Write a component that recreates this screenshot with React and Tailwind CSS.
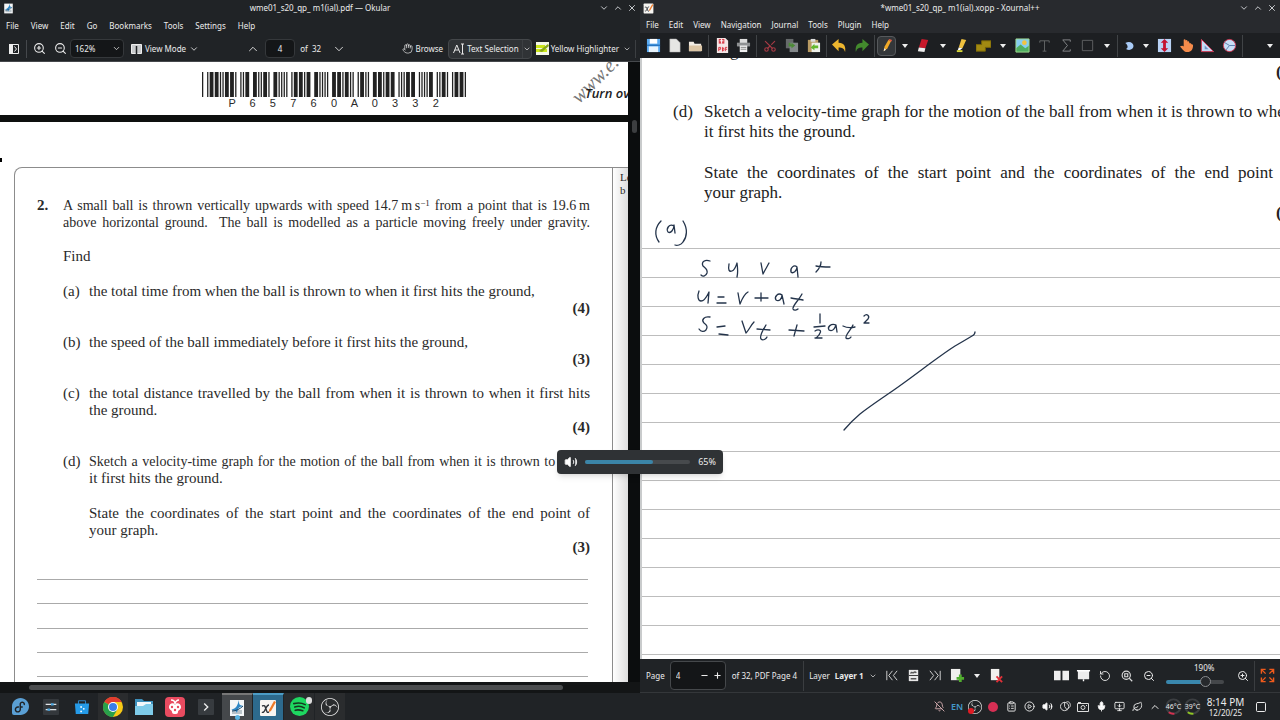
import {
  BellOff, ChevronDown, ChevronUp, ClipboardList, Hand, Leaf, Mic, Minus,
  MonitorDown, PlayCircle, Plus, RotateCcw, Scissors, Square, Volume2, X, ZoomIn, ZoomOut,
} from 'lucide-react'
import { SiFedora, SiObsstudio } from 'react-icons/si'

const OKULAR_MENU = ['File', 'View', 'Edit', 'Go', 'Bookmarks', 'Tools', 'Settings', 'Help']
const XOURNAL_MENU = ['File', 'Edit', 'View', 'Navigation', 'Journal', 'Tools', 'Plugin', 'Help']

// Code 39: nine elements per character, bars and spaces alternating
const CODE39 = {
  '*': 'nwnnwnwnn', P: 'nnwnwnnwn', 6: 'nnwwwnnnn', 5: 'wnnwwnnnn', 7: 'nnnwnnwnw',
  0: 'nnnwwnwnn', A: 'wnnnnwnnw', 3: 'wnwwnnnnn', 2: 'nnwwnnnnw',
}
const PAPER_CODE = 'P65760A0332'

function Barcode({ value }) {
  const bars = []
  let x = 0
  for (const ch of `*${value}*`) {
    CODE39[ch].split('').forEach((el, i) => {
      const w = el === 'w' ? 3 : 1
      if (i % 2 === 0) bars.push(<rect key={x} x={x} width={w} height="10" />)
      x += w
    })
    x += 1
  }
  return (
    <svg viewBox={`0 0 ${x - 1} 10`} preserveAspectRatio="none" className="w-full h-[25px] fill-[#222]" aria-label="Barcode">
      {bars}
    </svg>
  )
}

function WindowButtons() {
  return (
    <div className="absolute right-0 top-0 h-4 flex items-center gap-1 pr-[3px] text-gray-200">
      <button aria-label="Minimize"><ChevronDown size={10} /></button>
      <button aria-label="Maximize"><ChevronUp size={10} /></button>
      <button aria-label="Close"><X size={10} /></button>
    </div>
  )
}

function OkularIcon({ className }) {
  return (
    <svg viewBox="0 0 18 18" className={className}>
      <path d="M2 1h14v16H2z" fill="#f4f6f7" />
      <path d="M4 11h10v4H4z" fill="#b9c3c9" />
      <path d="M2 10c4 1 7-1 9-9 0 4 0 5 4 6-4 1-5 2-6 7-1-3-4-3-7-4z" fill="#2d86c4" />
      <path d="M4 12c4 0 8-2 11-5" fill="none" stroke="#14456b" />
    </svg>
  )
}

function XournalIcon({ className }) {
  return (
    <svg viewBox="0 0 18 18" className={className}>
      <rect x="1" y="1" width="16" height="16" rx="1" fill="#f7f5f2" />
      <path d="M3 7c3-1 3 0 4 3s1 4 3 3M10 6c-2 0-3 3-4 5s-2 3-3 2" fill="none" stroke="#30343a" strokeWidth="1.4" />
      <path d="m10 11 5-9 2 1-5 9-2 1z" fill="#ee7a28" />
    </svg>
  )
}

function Menu({ items, className }) {
  return (
    <nav className={`flex items-center pl-[6px] ${className}`}>
      {items.map((item) => <button key={item}>{item}</button>)}
    </nav>
  )
}

function OkularToolbar() {
  return (
    <div className="h-[26px] shrink-0 flex items-center pl-[9px] border-b border-[#45484c]">
      <button aria-label="Show sidebar">
        <svg viewBox="0 0 10 10" className="w-[10px] h-[10px]">
          <path d="M.5.5h9v9h-9z" fill="none" stroke="#eee" />
          <path d="M0 0h4v10H0z" fill="#eee" />
          <path d="m5.500 2.500 2 2.500-2 2.500" fill="none" stroke="#eee" />
        </svg>
      </button>
      <span className="w-px h-[18px] bg-[#45484c] ml-[7px] mr-[6px]" />
      <button aria-label="Zoom in"><ZoomIn size={13} strokeWidth={2} /></button>
      <button aria-label="Zoom out" className="ml-2"><ZoomOut size={13} strokeWidth={2} /></button>
      <div className="relative ml-[3px]">
        <select aria-label="Zoom" className="appearance-none w-[54px] h-[19px] pl-1 bg-[#141618] border border-[#35383b] rounded-sm">
          <option>162%</option>
        </select>
        <ChevronDown size={9} className="absolute right-[3px] top-[5px] pointer-events-none" />
      </div>
      <button className="flex items-center gap-[3px] ml-[7px]">
        <svg viewBox="0 0 11 10" className="w-[11px] h-[10px]">
          <path d="M.5.5h10v9H.5z" fill="#c9cbcd" stroke="#eee" />
          <path d="M5.500 2v8" stroke="#202326" strokeWidth="1.500" />
        </svg>
        View Mode
        <ChevronDown size={10} />
      </button>
      <button aria-label="Previous page" className="ml-[47px]"><ChevronUp size={14} strokeWidth={1.5} /></button>
      <input aria-label="Page" defaultValue="4" className="w-[30px] h-[19px] ml-[5px] text-center bg-[#141618] border border-[#35383b] rounded-sm" />
      <span className="ml-[5px] whitespace-nowrap">of&nbsp; 32</span>
      <button aria-label="Next page" className="ml-[11px]"><ChevronDown size={14} strokeWidth={1.5} /></button>
      <button className="flex items-center gap-[2px] ml-auto mr-[5px]"><Hand size={11} strokeWidth={1.5} />Browse</button>
      <button className="flex items-center h-[20px] pl-[4px] whitespace-nowrap bg-[#303336] border border-[#44474a] rounded-sm">
        <svg viewBox="0 0 12 12" className="w-3 h-3 mr-[2px]" fill="none" stroke="#e8e8e8">
          <path d="m.5 10 3.300-8 3.300 8M1.800 7h4M8 1h3M8 11h3M9.500 1v10" />
        </svg>
        Text Selection
        <span className="flex items-center h-full ml-[3px] border-l border-[#3c3f42]"><ChevronDown size={8} /></span>
      </button>
      <button className="flex items-center gap-[2px] ml-[4px] whitespace-nowrap">
        <svg viewBox="0 0 13 13" className="w-[13px] h-[13px]">
          <path d="M0 0h13v13H0z" fill="#f5f8e8" />
          <path d="M0 3h9v3H0zM0 7h11v3H0z" fill="#cbe61c" />
          <path d="m3 9 9-7 1 2-7 6z" fill="#87a719" />
        </svg>
        Yellow Highlighter
      </button>
      <button aria-label="Highlighter colors" className="mx-[4px]"><ChevronDown size={8} /></button>
      <span className="w-px h-[18px] bg-[#3c3f42] mr-[4px]" />
    </div>
  )
}

function Question({ label, marks, children }) {
  return (
    <div>
      <div className="flex">
        <span className="w-[26px] shrink-0">{label}</span>
        <div className="flex-1 min-w-0">{children}</div>
      </div>
      {marks && <p className="text-right font-bold">{marks}</p>}
    </div>
  )
}

const JUSTIFY = '[text-align-last:justify] whitespace-nowrap'

function OkularPage() {
  return (
    <div className="flex-1 min-w-0 relative overflow-hidden bg-white text-[#2a2a2a] font-['Liberation_Serif',serif]">
      <div className="relative h-[53px]">
        <div className="w-[264px] ml-[202px] pt-[10px]">
          <Barcode value={PAPER_CODE} />
          <div className="flex px-[20px] text-[11px] leading-[13px] font-['Liberation_Sans',sans-serif]">
            {PAPER_CODE.split('').map((ch, i) => <span key={i} className="flex-1 text-center">{ch}</span>)}
          </div>
        </div>
        <span className="absolute left-[566px] top-[7px] -rotate-45 text-[20px] leading-5 italic text-[#777]">www.e.</span>
        <span className="absolute left-[585px] top-[23px] text-[13px] leading-4 font-semibold italic text-[#222] whitespace-nowrap font-['Open_Sans',sans-serif]">Turn ov</span>
      </div>
      <div className="h-[7px] bg-[#0e100f]" />
      <div className="h-[36px]" />
      <div className="h-[4px] w-[2px] bg-black" />
      <div className="h-[5px]" />
      <div className="flex pl-[14px] h-[540px]">
        <div className="flex-1 min-w-0 pl-[22px] pr-[22px] pt-[29px] border-t border-x border-[#8c8c8c] rounded-tl-lg text-[15px] leading-[17px]">
          <div className="flex">
            <b className="w-[26px] shrink-0">2.</b>
            <div className="flex-1 min-w-0 flex flex-col">
              <p className={`text-[14px] ${JUSTIFY}`}>A small ball is thrown vertically upwards with speed 14.7&#8201;m&#8201;s<sup className="text-[9px] leading-none">−1</sup> from a point that is 19.6&#8201;m</p>
              <p className={`text-[14px] ${JUSTIFY}`}>above horizontal ground.&nbsp; The ball is modelled as a particle moving freely under gravity.</p>
              <p className="mt-[17px] mb-[18px]">Find</p>
              <div className="flex flex-col gap-[17px]">
                <Question label="(a)" marks="(4)"><p>the total time from when the ball is thrown to when it first hits the ground,</p></Question>
                <Question label="(b)" marks="(3)"><p>the speed of the ball immediately before it first hits the ground,</p></Question>
                <Question label="(c)" marks="(4)">
                  <p className={JUSTIFY}>the total distance travelled by the ball from when it is thrown to when it first hits</p>
                  <p>the ground.</p>
                </Question>
                <Question label="(d)" marks="(3)">
                  <p className={`text-[14px] ${JUSTIFY}`}>Sketch a velocity-time graph for the motion of the ball from when it is thrown to when</p>
                  <p>it first hits the ground.</p>
                  <p className={`mt-[18px] ${JUSTIFY}`}>State the coordinates of the start point and the coordinates of the end point of</p>
                  <p>your graph.</p>
                </Question>
              </div>
            </div>
          </div>
          <div className="flex flex-col h-[121px] mr-[2px]">
            {[1, 2, 3, 4, 5].map((n) => <div key={n} className="flex-1 border-b border-[#aaa]" />)}
          </div>
        </div>
        <div className="w-[15px] shrink-0 border-t border-[#8c8c8c] pt-[3px] pl-[7px] text-[11px] leading-[13px] whitespace-nowrap bg-linear-to-r from-white to-[#dedede]">
          <p>Le</p>
          <p>b</p>
        </div>
      </div>
    </div>
  )
}

function Okular() {
  return (
    <section className="flex flex-col min-w-0 min-h-0 bg-[#202326]">
      <header className="relative h-4 shrink-0 flex items-center justify-center">
        <OkularIcon className="absolute left-[3px] top-[3px] w-[11px] h-[11px]" />
        wme01_s20_qp_ m1(ial).pdf — Okular
        <WindowButtons />
      </header>
      <Menu items={OKULAR_MENU} className="h-5 shrink-0 gap-[12px]" />
      <OkularToolbar />
      <div className="flex flex-1 min-h-0">
        <OkularPage />
        <div className="w-3 bg-[#0b0d0e] flex justify-center pt-[58px]">
          <span className="w-[5px] h-[13px] rounded-full bg-[#3c3e40]" />
        </div>
      </div>
      <div className="h-[11px] shrink-0 bg-[#131516] pt-[3px] pl-[29px] pr-[77px]">
        <div className="h-[5px] rounded-full bg-[#4b4d4f]" />
      </div>
    </section>
  )
}

const ART = {
  save: <><path d="M1 1h14v14H1z" fill="#5aa9f0" /><path d="M4 1h8v5H4z" fill="#fff" /><path d="M3 9h10v6H3z" fill="#e9f4fd" /><path d="M1 7h14v1.500H1z" fill="#2673bd" /></>,
  page: <path d="M3 1h7l4 4v10H3z" fill="#e6e6e4" stroke="#aaa" strokeWidth=".5" />,
  folder: <><path d="M1 4h5l1 2h7v8H1z" fill="#f1ece4" /><path d="M1 8h14v6H1z" fill="#dcc6a6" /></>,
  pdf: <><path d="M2 0h9l3 3v13H2z" fill="#f3e6e6" /><path d="M4 1h6v5H4z" fill="#d8404d" /><path d="M5 3h4M7 1v5" stroke="#fff" /><path d="M4 14v-4h2v2H4M8 10v4c2 0 2-4 0-4M11 14v-4h2M11 12h2" fill="none" stroke="#d8303d" /></>,
  print: <><path d="M4 1h8v5H4z" fill="#ddd" /><path d="M1 5h14v4H1z" fill="#8f9193" /><path d="M4 8h8v7H4z" fill="#eee" /><path d="M5 10h6M5 12h6" stroke="#888" /></>,
  copy: <><path d="M2 1h8v10H2z" fill="#666a6b" /><path d="M6 5h9v10H6z" fill="#83888a" /><path d="M5 5v4h3v2l4-3-4-3v2H7V5z" fill="#4a8a34" /></>,
  paste: <><path d="M2 2h11v13H2z" fill="#b99b63" /><path d="M5 1h5v3H5z" fill="#ddd" /><path d="M6 5h9v10H6z" fill="#eef0ea" /><path d="M13 8H9V6l-4 4 4 3v-2h4z" fill="#65b82e" /></>,
  undo: <path d="M0 7 7 1v4c6 0 8 4 7 10-1-4-3-5-7-5v4z" fill="#eeb62f" />,
  redo: <path d="M16 7 9 1v4C3 5 1 9 2 15c1-4 3-5 7-5v4z" fill="#438a2d" />,
  pen: <><path d="m5 14 1-5 4-7 3 1-4 8z" fill="#f0a928" /><path d="m10 2 1-1 3 1-1 2z" fill="#e15a45" /><path d="m5 14 .5-3 2 1.500z" fill="#eee" /></>,
  eraser: <><path d="m6 1 7 1-3 9-7-1z" fill="#c8192b" /><path d="m3 10 7 1-1 4-7-1z" fill="#eee" /></>,
  marker: <><path d="m8 1 5 1-4 9-4-1z" fill="#edbf3e" /><path d="m5 10 4 1-3 2H4z" fill="#fff" /><path d="M3 14h6" stroke="#d9d93a" strokeWidth="2" /></>,
  brick: <path d="M6 3h10v7h-6v4H0V7h6z" fill="#a28a12" stroke="#776407" />,
  image: <><path d="M1 1h14v14H1z" fill="#86cdf1" /><path d="M1 11 6 7l5 4 4-3v7H1z" fill="#4fae61" /><circle cx="10" cy="5" r="2.500" fill="#f3c33f" /><path d="M1 1h14v14H1z" fill="none" stroke="#9fdc8c" /></>,
  text: <path d="M3 5V3h10v2M8 3v11M6 14h4" fill="none" stroke="#646668" />,
  sigma: <path d="M12 4V2H4l5 6-5 6h8v-2" fill="none" stroke="#85878a" />,
  rect: <path d="M2.500 2.500h11v11h-11z" fill="none" stroke="#5f6163" />,
  shape: <path d="M3 4c6-3 11 0 11 4s-5 7-10 4c3-1 3-5-1-8z" fill="#a9cbf7" />,
  vspace: <><path d="M1 1h14v14H1z" fill="#b9d2f5" /><path d="M8 1 4 5h2.500v6H4l4 4 4-4H9.500V5H12z" fill="#c41230" /></>,
  hand: <path d="M5 9V2c0-1 2-1 2 0v1c0-1 2-1 2 0v1c1-1 2 0 2 1s2 0 2 1 2 0 2 2c0 4-2 7-6 7-4 0-5-3-8-6 2-1 3-1 4 0z" fill="#f58b4b" />,
  setsquare: <><path d="M1.500 1.500v13h13z" fill="#c5dbf6" stroke="#d23b56" /><path d="M5 8v4h4z" fill="#6f93c4" /></>,
  compass: <><circle cx="8" cy="8" r="6.500" fill="#c8def7" stroke="#d23b56" /><path d="M8 8 3 5M8 8h6M8 8l-4 5" stroke="#5b7fae" /></>,
  addPage: <><path d="M1 1h10v12H1z" fill="#f0f0ee" /><path d="M11 7v8M7 11h8" stroke="#51ad2f" strokeWidth="3" /></>,
  deletePage: <><path d="M2 1h9v12H2z" fill="#f0f0ee" /><path d="m8 9 6 6M14 9l-6 6" stroke="#e03038" strokeWidth="2" /></>,
  firstPage: <path d="M3 3v10M9 3 5 8l4 5M14 3l-4 5 4 5" fill="none" stroke="#d8d8d8" />,
  lastPage: <path d="M13 3v10M7 3l4 5-4 5M2 3l4 5-4 5" fill="none" stroke="#d8d8d8" />,
  gotoPage: <><path d="M3 2h10v12H3z" fill="#e8e8e8" /><path d="M3 8h10" stroke="#333" /><path d="M5 6c1-3 2 0 3-1s2-1 3 0M5 11.500h6" fill="none" stroke="#555" strokeWidth="1.500" /></>,
  twoPages: <path d="M0 3h7v10H0zM9 3h7v10H9z" fill="#eee" />,
  present: <><path d="M2 3h12v9H2z" fill="#ececec" /><path d="M1 3h14M8 12v2" stroke="#fff" strokeWidth="1.500" /></>,
  zoomFit: <><circle cx="7" cy="7" r="5.500" fill="none" stroke="#ddd" strokeWidth="1.500" /><path d="M5 5h4v4H5zM11 11l4 4" fill="none" stroke="#ddd" strokeWidth="1.500" /></>,
  fullscreen: <path d="M1.500 6V1.500H6M2 2l4 4M10 1.500h4.500V6M14 2l-4 4M1.500 10v4.500H6M2 14l4-4M10 14.500h4.500V10M14 14l-4-4" fill="none" stroke="#ee5a1c" strokeWidth="1.500" />,
}

function Art({ name, className = 'w-[15px] h-[15px]' }) {
  return <svg viewBox="0 0 16 16" className={className}>{ART[name]}</svg>
}

function Tool({ name, wide }) {
  return (
    <button aria-label={name} className={`${wide ? 'w-[22px]' : 'w-[21px]'} shrink-0 flex justify-center`}>
      <Art name={name} />
    </button>
  )
}

function Arrow() {
  return (
    <button aria-label="More options" className="w-[17px] shrink-0 flex justify-center">
      <svg viewBox="0 0 6 4" className="w-[6px] h-1"><path d="M0 0h6L3 4z" fill="#eee" /></svg>
    </button>
  )
}

function Divider() {
  return <span className="w-px h-[22px] mx-[2px] shrink-0 bg-[#404346]" />
}

function XournalToolbar() {
  return (
    <div className="h-[25px] shrink-0 flex items-center px-[2px] bg-[#1d1f22]">
      <Tool name="save" wide /><Tool name="page" /><Tool name="folder" />
      <Divider />
      <Tool name="pdf" wide /><Tool name="print" />
      <Divider />
      <button aria-label="cut" className="w-[22px] flex justify-center"><Scissors size={14} strokeWidth={2} className="-rotate-90 text-[#a43a44]" /></button>
      <Tool name="copy" /><Tool name="paste" wide />
      <Divider />
      <Tool name="undo" /><Tool name="redo" wide />
      <Divider />
      <button aria-label="pen" className="w-[19px] h-[20px] shrink-0 flex items-center justify-center bg-[#34373a] border border-[#56595c] rounded-sm">
        <Art name="pen" />
      </button>
      <Arrow /><Tool name="eraser" /><Arrow /><Tool name="marker" /><Tool name="brick" wide /><Arrow />
      <Tool name="image" wide /><Tool name="text" wide /><Tool name="sigma" wide /><Tool name="rect" /><Arrow />
      <Divider />
      <button aria-label="shape" className="w-[17px] flex justify-center"><Art name="shape" className="w-3 h-3" /></button>
      <Arrow /><Tool name="vspace" /><Tool name="hand" wide /><Tool name="setsquare" /><Tool name="compass" wide />
      <Divider />
      <span className="flex-1" />
      <Arrow />
    </div>
  )
}

// Pen strokes written over the ruled page
const INK = [
  'M21 11c-6 6-7 14-2 21', 'M34 16c-5-3-8 3-6 6 3 2 6-3 6-7l1 8', 'M43 11c5 8 4 16 0 21-2 3-6 4-8 3',
  'M70 51c-5-2-9 1-7 5 2 2 5 3 4 7-1 3-4 4-6 2', 'M89 54c-1 6 0 8 3 7 3-1 4-5 5-8 1 7 1 10 0 14',
  'M121 53l2 11c2-4 5-9 6-11', 'M157 57c-3-3-7 1-6 5 2 2 6-1 6-5l1 10', 'M181 52c0 4-3 8-5 10M176 56c5 1 9 1 14 1',
  'M59 81c-2 5-1 10 2 10 4 0 6-5 8-9l-1 11', 'M78 87h6M77 93h9', 'M98 83l2 11c2-5 4-10 8-12', 'M115 88h13M121 83v8',
  'M142 85c-4-3-8 2-6 5 3 2 6-1 6-5l2 9', 'M162 84c-3 6-10 12-9 15 1 2 4 1 5 0M151 88c4 1 8 1 12 2',
  'M70 107c-6-1-9 3-6 6 3 2 4 4 2 7-2 2-5 2-7-1', 'M77 117l8-1M79 124l9 1', 'M102 111l4 12c3-3 5-8 8-11',
  'M126 115c-3 5-7 11-5 14 2 2 5 0 6-2M117 119l13 1', 'M149 120l15 1M157 115l-3 11',
  'M180 104v9M174 117l11-1M175 121c3-2 7-1 5 2-1 3-4 5-5 5h7', 'M196 115c-5-2-9 2-7 5 4 2 6-2 7-5l1 7',
  'M213 115c-2 5-8 10-7 13 1 1 4 1 5-1M203 116c4 2 8 2 12 1', 'M224 106c3-3 6 0 4 3l-4 4h5',
  'M204 220c6-7 10-11 16-16C229 197 238 191 248 184c12-8 24-17 36-26 11-8 20-15 31-22 7-4 12-7 17-10 2-1 3-2 3-4',
]

function XournalPage() {
  return (
    <div className="flex-1 min-h-0 relative overflow-hidden pl-[2px] bg-[#c9cbcc]">
      <div className="h-full bg-white text-[#222] text-[17px] leading-[20px] font-['Liberation_Serif',serif]">
        <div className="h-[190px] pt-[44px] pl-[31px] flex whitespace-nowrap">
          <span className="w-[31px] shrink-0">(d)</span>
          <div className="flex-1 min-w-0">
            <p>Sketch a velocity-time graph for the motion of the ball from when it is thrown to when</p>
            <p>it first hits the ground.</p>
            <p className="mt-[21px] mr-[7px] [text-align-last:justify]">State the coordinates of the start point and the coordinates of the end point</p>
            <p>your graph.</p>
          </div>
        </div>
        {Array.from({ length: 15 }, (_, i) => (
          <div key={i} className={i ? 'h-[29px] border-b border-[#bdbdbd]' : 'h-px bg-[#bdbdbd]'} />
        ))}
      </div>
      <span className="absolute left-[90px] -top-[17px] text-[17px] leading-5 text-[#222] font-['Liberation_Serif',serif]">g</span>
      <b className="absolute left-[636px] top-[4px] text-[17px] leading-5 text-[#222] font-['Liberation_Serif',serif]">(</b>
      <b className="absolute left-[636px] top-[145px] text-[17px] leading-5 text-[#222] font-['Liberation_Serif',serif]">(</b>
      <svg viewBox="0 0 350 230" className="absolute left-0 top-[152px] w-[350px] h-[230px]" fill="none" stroke="#24344b" strokeWidth="1.3" strokeLinecap="round" strokeLinejoin="round" aria-label="Handwritten working">
        {INK.map((d) => <path key={d} d={d} />)}
      </svg>
    </div>
  )
}

function XournalStatus() {
  return (
    <div className="h-[34px] shrink-0 flex items-center pl-[6px] whitespace-nowrap bg-[#202326] border-b border-[#34373a]">
      <label htmlFor="page-no">Page</label>
      <div className="flex items-center w-[56px] h-[29px] ml-[5px] pl-[5px] pr-[1px] bg-[#141618] border border-[#45484b] rounded-sm">
        <input id="page-no" defaultValue="4" className="flex-1 min-w-0 bg-transparent" />
        <button aria-label="Decrease" className="w-[13px]"><Minus size={9} strokeWidth={3} /></button>
        <button aria-label="Increase" className="w-[11px]"><Plus size={9} strokeWidth={3} /></button>
      </div>
      <span className="ml-[6px]">of 32, PDF Page 4</span>
      <span className="w-px h-[30px] ml-[6px] mr-[5px] bg-[#3a3d40]" />
      <span>Layer</span>
      <button className="flex items-center gap-[5px] ml-[5px] mr-[4px] font-bold">Layer 1<ChevronDown size={8} /></button>
      <Tool name="firstPage" wide /><Tool name="gotoPage" wide /><Tool name="lastPage" wide />
      <Tool name="addPage" wide /><Arrow /><Tool name="deletePage" />
      <span className="flex-1" />
      <Tool name="twoPages" wide /><Tool name="present" wide />
      <button aria-label="Reset zoom" className="w-[22px] flex justify-center"><RotateCcw size={12} strokeWidth={1.8} /></button>
      <button aria-label="Fit page" className="w-[22px] flex justify-center"><Art name="zoomFit" className="w-3 h-3" /></button>
      <button aria-label="Zoom out" className="w-[21px] flex justify-center"><ZoomOut size={12} /></button>
      <label className="w-[58px] ml-[7px] mr-[12px] flex flex-col">
        <span className="pl-[28px] leading-[12px]">190%</span>
        <input
          type="range"
          defaultValue="72"
          className="appearance-none w-full h-1 my-[6px] rounded-full bg-[linear-gradient(to_right,#3987ad_65%,#44474a_65%)] [&::-webkit-slider-thumb]:appearance-none [&::-webkit-slider-thumb]:w-[11px] [&::-webkit-slider-thumb]:h-[11px] [&::-webkit-slider-thumb]:rounded-full [&::-webkit-slider-thumb]:bg-[#26292c] [&::-webkit-slider-thumb]:border [&::-webkit-slider-thumb]:border-[#8a8d90]"
        />
      </label>
      <button aria-label="Zoom in" className="w-[13px] flex justify-center"><ZoomIn size={12} /></button>
      <span className="w-px h-[30px] ml-[5px] mr-px bg-[#3a3d40]" />
      <Tool name="fullscreen" wide />
      <span className="w-[2px]" />
    </div>
  )
}

function Xournal() {
  return (
    <section className="flex flex-col min-w-0 min-h-0 bg-[#282a2e]">
      <header className="relative h-4 shrink-0 flex items-center justify-center">
        <XournalIcon className="absolute left-[3px] top-[3px] w-[11px] h-[11px]" />
        *wme01_s20_qp_ m1(ial).xopp - Xournal++
        <WindowButtons />
      </header>
      <Menu items={XOURNAL_MENU} className="h-[17px] shrink-0 gap-[10px]" />
      <XournalToolbar />
      <XournalPage />
      <XournalStatus />
    </section>
  )
}

function VolumeOsd({ level }) {
  return (
    <div className="absolute left-1/2 -translate-x-1/2 bottom-[246px] flex items-center w-[166px] h-6 px-[7px] rounded-sm bg-[#2f3235] shadow-md">
      <Volume2 size={14} fill="white" strokeWidth={1.5} />
      <div role="progressbar" aria-label="Volume" className="flex-1 h-1 ml-[7px] mr-[8px] rounded-full bg-[#474a4d]">
        <div className="h-full rounded-full bg-[#3b85a8]" style={{ width: `${level}%` }} />
      </div>
      <span className="text-[9px]">{level}%</span>
    </div>
  )
}

const APPS = [
  { name: 'Fedora', art: <SiFedora size={17} color="#5a9fd4" /> },
  { name: 'System Settings', art: <svg viewBox="0 0 18 18" className="w-[16px] h-[16px]"><rect width="18" height="18" rx="1" fill="#34383c" /><path d="M3 6h12M3 12h12" stroke="#dfe3e6" strokeWidth="1.500" /><path d="M9 6h3M5 12h3" stroke="#4aa5df" strokeWidth="2.500" /></svg> },
  { name: 'Discover', art: <svg viewBox="0 0 18 18" className="w-[16px] h-[18px]"><path d="M5 6V2h8v4" fill="none" stroke="#3492d6" /><path d="M1 5h16l-1 12H2z" fill="#259be8" /><circle cx="8" cy="9" r="1" fill="#fff" /><circle cx="11" cy="11" r="1" fill="#fff" /><circle cx="8" cy="14" r="1" fill="#fff" /></svg> },
  { name: 'Chrome', active: 'bg-[#2a2c2e]', art: <svg viewBox="0 0 20 20" className="w-[20px] h-[20px]"><circle cx="10" cy="10" r="10" fill="#f8c916" /><path d="M10 10 1.300 5A10 10 0 0 1 18.700 5H10z" fill="#e13c2f" /><path d="M1.300 5A10 10 0 0 0 10 20l4.300-7.500L10 10z" fill="#28a04b" /><circle cx="10" cy="10" r="5" fill="#fff" /><circle cx="10" cy="10" r="4" fill="#3b7de9" /></svg> },
  { name: 'Files', art: <svg viewBox="0 0 18 18" className="w-[18px] h-[18px]"><path d="M0 1h7l2 2h9v13H0z" fill="#3d8fba" /><path d="M2 4h14v5H2z" fill="#f2f7fa" /><path d="M0 8h8l3-2h7v11H0z" fill="#7ecbe9" /></svg> },
  { name: 'Strawberry', art: <svg viewBox="0 0 20 20" className="w-[20px] h-[20px]"><rect width="20" height="20" rx="4" fill="#e94b60" /><path d="M10 8c1-3 6-2 6 2 0 3-3 3-3 5s-2 2-3 2-3 0-3-2-3-2-3-5c0-4 5-5 6-2z" fill="#fff" /><path d="M10 7c0-3-2-4-4-4M10 7c0-2 2-4 4-4" stroke="#fff" fill="none" strokeWidth="1.500" /><circle cx="7" cy="10" r="1.200" fill="#e94b60" /><circle cx="13" cy="10" r="1.200" fill="#e94b60" /><circle cx="10" cy="13" r="1.200" fill="#e94b60" /></svg> },
  { name: 'Konsole', art: <svg viewBox="0 0 18 18" className="w-[16px] h-[16px]"><rect width="18" height="18" rx="1" fill="#373b3f" /><path d="m7 5 4 4-4 4" fill="none" stroke="#eee" strokeWidth="1.500" /></svg> },
  { name: 'Okular', active: 'bg-[#45484b] border-t-2 border-[#777]', dot: true, art: <OkularIcon className="w-[18px] h-[18px]" /> },
  { name: 'Xournal++', active: 'bg-[#2d6a8d] border-t-2 border-[#4b9cc6]', art: <XournalIcon className="w-[18px] h-[18px]" /> },
  { name: 'Spotify', active: 'bg-[#2a2c2e]', badge: true, art: <svg viewBox="0 0 20 20" className="w-[19px] h-[19px]"><circle cx="10" cy="10" r="10" fill="#1ed760" /><path d="M4 7c4-1 8-1 12 1M5 10.500c3-1 7-1 10 1M5.500 14c3-1 5-.5 8 .5" stroke="#16361f" strokeWidth="1.700" fill="none" strokeLinecap="round" /></svg> },
  { name: 'OBS', active: 'bg-[#2a2c2e]', art: <SiObsstudio size={18} color="#e8e8e8" /> },
]

const TRAY = [
  { name: 'Notifications muted', art: <BellOff size={11} color="#d9b0b4" /> },
  { name: 'Keyboard layout', art: <b className="text-[9px] font-semibold text-[#4398c9]">EN</b> },
  { name: 'OBS tray', art: <span className="relative"><SiObsstudio size={14} /><i className="absolute left-0 bottom-0 w-[6px] h-[6px] rounded-full bg-[#e01b24]" /></span> },
  { name: 'Recording', art: <i className="w-[10px] h-[10px] rounded-full bg-[#d62f54]" /> },
  { name: 'Clipboard', art: <ClipboardList size={11} /> },
  { name: 'Media', art: <PlayCircle size={11} /> },
  { name: 'Volume', art: <Volume2 size={11} fill="white" /> },
  { name: 'Night light', art: <svg viewBox="0 0 12 12" className="w-[11px] h-[11px]" fill="none" stroke="#ddd"><circle cx="5" cy="6" r="4.500" /><path d="M5 1v5l3 4M7 1c3-1 5 2 4 5L8 9" /></svg> },
  { name: 'Camera', art: <svg viewBox="0 0 12 10" className="w-[12px] h-[10px]" fill="none" stroke="#ddd"><path d="M.5 1.500h11v8H.5zM1 .5h3" /><circle cx="6" cy="5.500" r="2" /><path d="M9 3.500h1" /></svg> },
  { name: 'Microphone', art: <Mic size={11} fill="white" /> },
  { name: 'Display', art: <MonitorDown size={11} /> },
  { name: 'Power', art: <Leaf size={11} /> },
  { name: 'Show hidden icons', art: <ChevronUp size={12} /> },
]

function TempGauge({ value, color }) {
  return (
    <span className="relative w-[19px] h-[17px] flex items-center justify-center text-[7px]">
      <svg viewBox="0 0 18 18" className="absolute w-[17px] h-[17px]" fill="none" strokeWidth="2">
        <circle cx="9" cy="9" r="7.500" stroke="#3c3f42" />
        <path d="M4 15a7.500 7.500 0 0 0 6 1.500" stroke={color} />
      </svg>
      <span className="relative">{value}°C</span>
    </span>
  )
}

function Taskbar() {
  return (
    <footer className="h-[27px] shrink-0 flex items-stretch pl-[5px] bg-[#202326]">
      {APPS.map(({ name, art, active = '', dot, badge }) => (
        <button key={name} aria-label={name} className={`relative w-[31px] flex items-center justify-center border-r border-r-[#202326] ${active}`}>
          {art}
          {dot && <i className="absolute bottom-0 w-[5px] h-[5px] rounded-full bg-[#5ab4e2]" />}
          {badge && <i className="absolute right-[2px] top-[4px] w-[6px] h-[7px] rounded-full bg-[#ddd]" />}
        </button>
      ))}
      <div className="flex items-center ml-auto">
        {TRAY.map(({ name, art }) => (
          <button key={name} aria-label={name} className="w-[18px] flex items-center justify-center">{art}</button>
        ))}
        <TempGauge value={46} color="#d6304f" />
        <TempGauge value={39} color="#8fc722" />
        <div className="w-[43px] pl-[4px] text-center whitespace-nowrap">
          <p className="text-[10px] leading-[11px]">8:14 PM</p>
          <p className="leading-[9px]">12/20/25</p>
        </div>
        <button aria-label="Show desktop" className="w-[35px] pr-[3px] flex justify-center"><Square size={12} /></button>
      </div>
    </footer>
  )
}

export default function App() {
  return (
    <div className="relative h-screen flex flex-col overflow-hidden bg-[#202326] text-[#ececec] text-[8px] leading-3 font-['Noto_Sans',sans-serif]">
      <main className="flex-1 min-h-0 grid grid-cols-2">
        <Okular />
        <Xournal />
      </main>
      <Taskbar />
      <VolumeOsd level={65} />
    </div>
  )
}
